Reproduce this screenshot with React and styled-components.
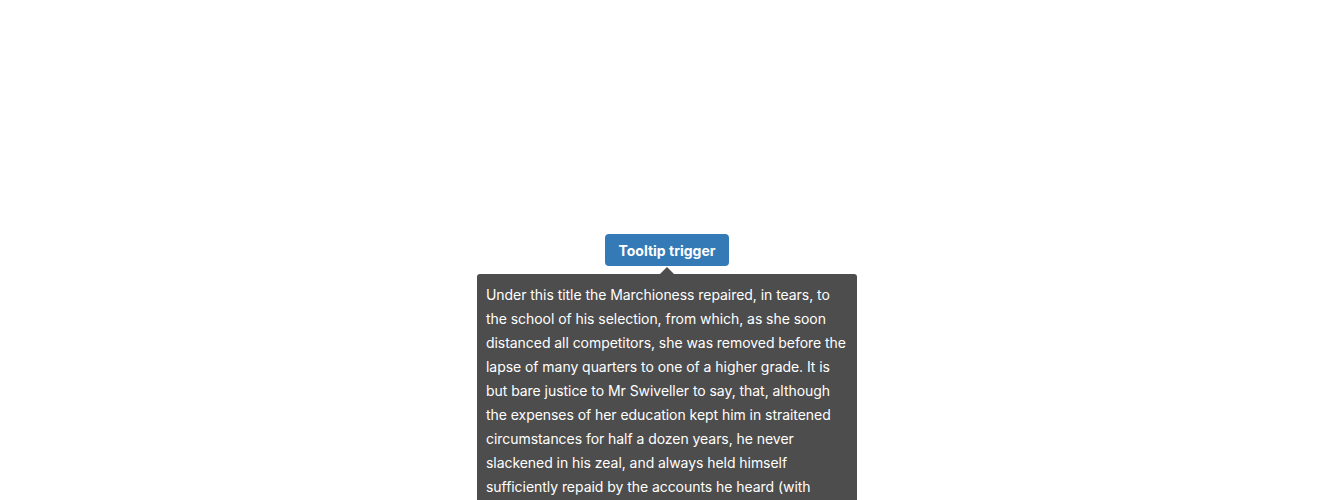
import React from 'react'
import styled, { createGlobalStyle } from 'styled-components'

const GlobalStyle = createGlobalStyle`
  body {
    margin: 0;
    background: #fff;
    font-family: Inter, "Noto Sans", sans-serif;
  }
`

const Page = styled.div`
  height: 500px;
  overflow: hidden;
  display: flex;
  justify-content: center;
  padding-top: 234px;
  box-sizing: border-box;
`

const Anchor = styled.div`
  position: relative;
  display: flex;
  flex-direction: column;
  align-items: center;
  height: 32px;
`

const Trigger = styled.button`
  height: 32px;
  padding: 0 14px;
  border: none;
  border-radius: 4px;
  background: #337ab7;
  color: #fff;
  font-family: Inter, sans-serif;
  font-size: 14px;
  font-weight: 700;
  cursor: pointer;
`

const Tooltip = styled.div`
  position: absolute;
  top: 40px;
  left: 50%;
  transform: translateX(-50%);
  width: 380px;
  box-sizing: border-box;
  padding: 9px 9px 8px;
  background: #4d4d4d;
  color: #fff;
  border-radius: 3px;
  font-size: 14px;
  line-height: 24px;
  letter-spacing: -0.05px;

  &::before {
    content: '';
    position: absolute;
    top: -7px;
    left: 50%;
    margin-left: -7px;
    border-left: 7px solid transparent;
    border-right: 7px solid transparent;
    border-bottom: 7px solid #4d4d4d;
  }
`

const text =
  'Under this title the Marchioness repaired, in tears, to the school of his selection, from which, as she soon distanced all competitors, she was removed before the lapse of many quarters to one of a higher grade. It is but bare justice to Mr Swiveller to say, that, although the expenses of her education kept him in straitened circumstances for half a dozen years, he never slackened in his zeal, and always held himself sufficiently repaid by the accounts he heard (with great elation) of her advancement, on his monthly visits to the governess, who looked upon him as a literary gentleman of eccentric habits, and of a most prodigious talent in quotation.'

const App = () => (
  <>
    <GlobalStyle />
    <Page>
      <Anchor>
        <Trigger>Tooltip trigger</Trigger>
        <Tooltip>{text}</Tooltip>
      </Anchor>
    </Page>
  </>
)

export default App
